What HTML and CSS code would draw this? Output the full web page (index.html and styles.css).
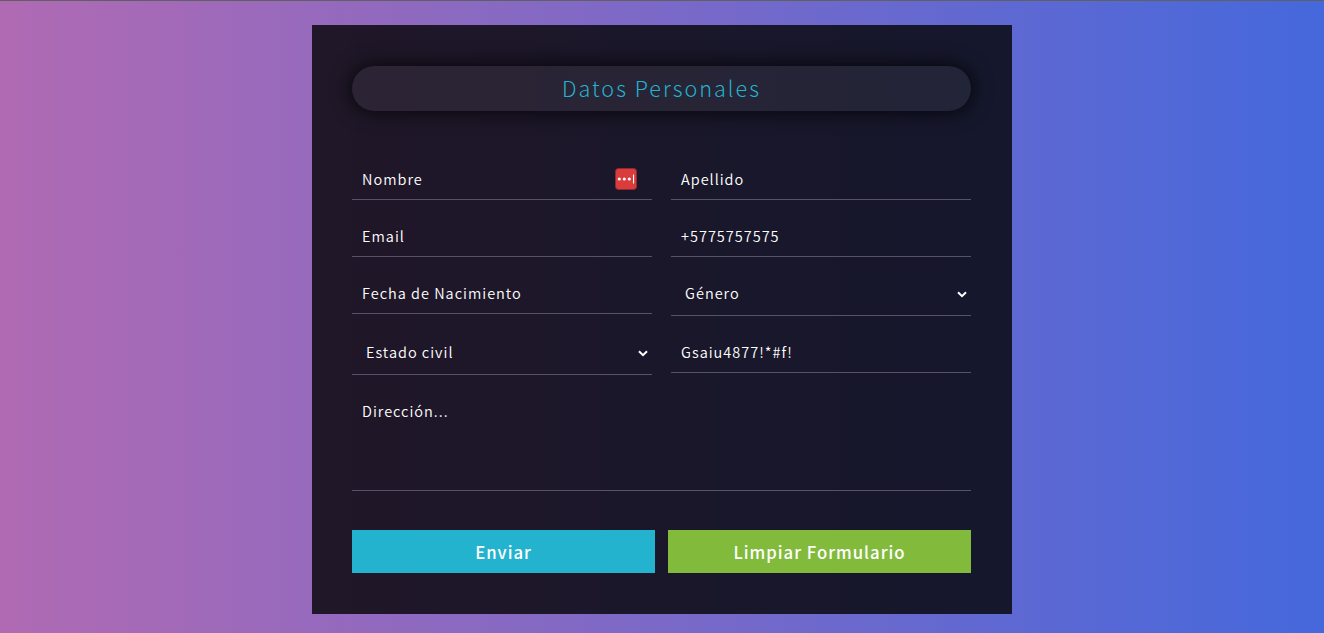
FILE: index.html
```html
<!DOCTYPE html>
<html lang="es">
<head>
<meta charset="utf-8">
<title>Datos Personales</title>
<link rel="stylesheet" href="styles.css">
</head>
<body>
<main class="page">
  <form class="form">
    <h1 class="title">Datos Personales</h1>
    <div class="fields">
      <div class="field">
        <span class="label">Nombre</span>
        <svg class="badge" width="22" height="22" viewBox="0 0 22 22">
          <rect x=".5" y=".5" width="21" height="21" rx="3" fill="#d93c3a" stroke="#8c2c32"/>
          <circle cx="4.3" cy="11" r="1.6" fill="#fff"/>
          <circle cx="9.3" cy="11" r="1.6" fill="#fff"/>
          <circle cx="14.3" cy="11" r="1.6" fill="#fff"/>
          <rect x="18" y="6.5" width="1.1" height="9" fill="#fff"/>
        </svg>
      </div>
      <div class="field">Apellido</div>
      <div class="field">Email</div>
      <div class="field">+5775757575</div>
      <div class="field">Fecha de Nacimiento</div>
      <div class="field field-select"><span class="label">Género</span>
        <svg class="chevron" width="10" height="7" viewBox="0 0 10 7"><path d="M1 1.2 5 5.2 9 1.2" fill="none" stroke="#fff" stroke-width="2"/></svg>
      </div>
      <div class="field field-select"><span class="label">Estado civil</span>
        <svg class="chevron" width="10" height="7" viewBox="0 0 10 7"><path d="M1 1.2 5 5.2 9 1.2" fill="none" stroke="#fff" stroke-width="2"/></svg>
      </div>
      <div class="field">Gsaiu4877!*#f!</div>
      <div class="field field-area">Dirección...</div>
    </div>
    <div class="actions">
      <button class="button send" type="button">Enviar</button>
      <button class="button clear" type="button">Limpiar Formulario</button>
    </div>
  </form>
</main>
</body>
</html>
```
FILE: styles.css
```css
* { box-sizing: border-box; }
body {
  margin: 0;
  font-family: "Noto Sans CJK SC", "Open Sans", sans-serif;
  font-weight: 300;
  color: #fff;
}
.page {
  height: 633px;
  padding-top: 24px;
  border-top: 1px solid #606060;
  background: linear-gradient(to right, #b06ab3, #4568dc);
  overflow: hidden;
}
.form {
  width: 700px;
  height: 589px;
  margin: 0 auto;
  padding: 41px 41px 0 40px;
  background: rgba(3, 3, 3, .8);
}
.title {
  height: 45px;
  margin: 0 0 52px;
  border-radius: 23px;
  background: rgba(255, 255, 255, .06);
  box-shadow: 0 0 20px 1px rgba(0, 0, 0, .8);
  color: #24b3ce;
  font-size: 21.6px;
  font-weight: 300;
  line-height: 43px;
  letter-spacing: 2px;
  text-align: center;
}
.fields {
  display: grid;
  grid-template-columns: 300px 300px;
  column-gap: 19px;
  row-gap: 20px;
  align-items: start;
}
.field {
  display: flex;
  justify-content: space-between;
  height: 37px;
  padding: 0 10px;
  border-bottom: 1px solid #575265;
  font-size: 14.5px;
  font-weight: 350;
  line-height: 31px;
  letter-spacing: 1px;
  white-space: pre;
}
.field-select {
  height: 39px;
  padding: 0 4px 0 14px;
}
.field-area {
  grid-column: 1 / -1;
  height: 96px;
}
.badge { margin: 5px 5px 0 0; }
.chevron { margin-top: 14px; }
.actions {
  display: flex;
  justify-content: space-between;
  margin-top: 39px;
}
.button {
  width: 303px;
  height: 43px;
  padding: 2px 0 0;
  border: 0;
  color: #fff;
  font-family: inherit;
  font-size: 16.7px;
  font-weight: 500;
  line-height: 41px;
  letter-spacing: 1px;
}
.send { background: #24b3ce; }
.clear { background: #82bb3c; }
```
